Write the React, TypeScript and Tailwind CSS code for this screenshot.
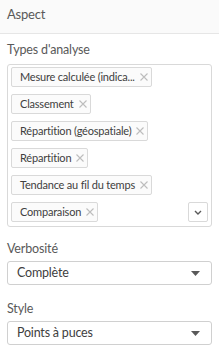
import React from "react";

const types = [
  "Mesure calculée (indica...",
  "Classement",
  "Répartition (géospatiale)",
  "Répartition",
  "Tendance au fil du temps",
  "Comparaison",
];

const Cross = () => (
  <svg width="8" height="8" viewBox="0 0 8 8" className="shrink-0">
    <path d="M0.5 0.5 L7.5 7.5 M7.5 0.5 L0.5 7.5" stroke="#bdbdbd" strokeWidth="1.1" />
  </svg>
);

const Chip = ({ label }: { label: string }) => (
  <div className="h-[20px] flex items-center gap-[5px] pl-[8px] pr-[3px] border border-[#d9d9d9] rounded-[2px] bg-[#fbfbfb] text-[11px] tracking-[-0.2px] text-[#404040]">
    <span className="whitespace-nowrap leading-[18px]">{label}</span>
    <Cross />
  </div>
);

const Select = ({ value }: { value: string }) => (
  <div className="h-[24px] flex items-center justify-between pl-[9px] pr-[11px] border border-[#d0d0d0] rounded-[3px] text-[12.5px] tracking-[-0.2px] text-[#404040]">
    <span>{value}</span>
    <svg width="9" height="5" viewBox="0 0 9 5">
      <path d="M0 0 L9 0 L4.5 5 Z" fill="#595959" />
    </svg>
  </div>
);

export default function App() {
  return (
    <div className="w-[219px] h-[352px] bg-white font-['Lato',sans-serif] text-[#404040]">
      <div className="h-[34px] border-b border-[#e6e6e6] bg-[#fafafa] px-[7px] pt-[6px] text-[13px] tracking-[-0.2px] leading-[17px] text-[#595959]">
        Aspect
      </div>
      <div className="px-[7px]">
        <div className="mt-[8px] text-[12.5px] tracking-[-0.15px] leading-[16px] text-[#595959]">Types d'analyse</div>
        <div className="mt-[6px] flex border border-[#d9d9d9] rounded-[3px] pl-[3px] pr-[3px] pt-[2px] pb-[4px]">
          <div className="flex-1 flex flex-col items-start gap-[7px]">
            {types.map((t) => (
              <Chip key={t} label={t} />
            ))}
          </div>
          <div className="self-end w-[20px] h-[20px] flex items-center justify-center border border-[#d9d9d9] rounded-[2px]">
            <svg width="8" height="5" viewBox="0 0 8 5">
              <path d="M1 1 L4 4 L7 1" stroke="#595959" strokeWidth="1.4" fill="none" />
            </svg>
          </div>
        </div>
        <div className="mt-[14px] text-[12.5px] tracking-[-0.15px] leading-[16px] text-[#595959]">Verbosité</div>
        <div className="mt-[4px]">
          <Select value="Complète" />
        </div>
        <div className="mt-[16px] text-[12.5px] tracking-[-0.15px] leading-[16px] text-[#595959]">Style</div>
        <div className="mt-[4px]">
          <Select value="Points à puces" />
        </div>
      </div>
    </div>
  );
}
